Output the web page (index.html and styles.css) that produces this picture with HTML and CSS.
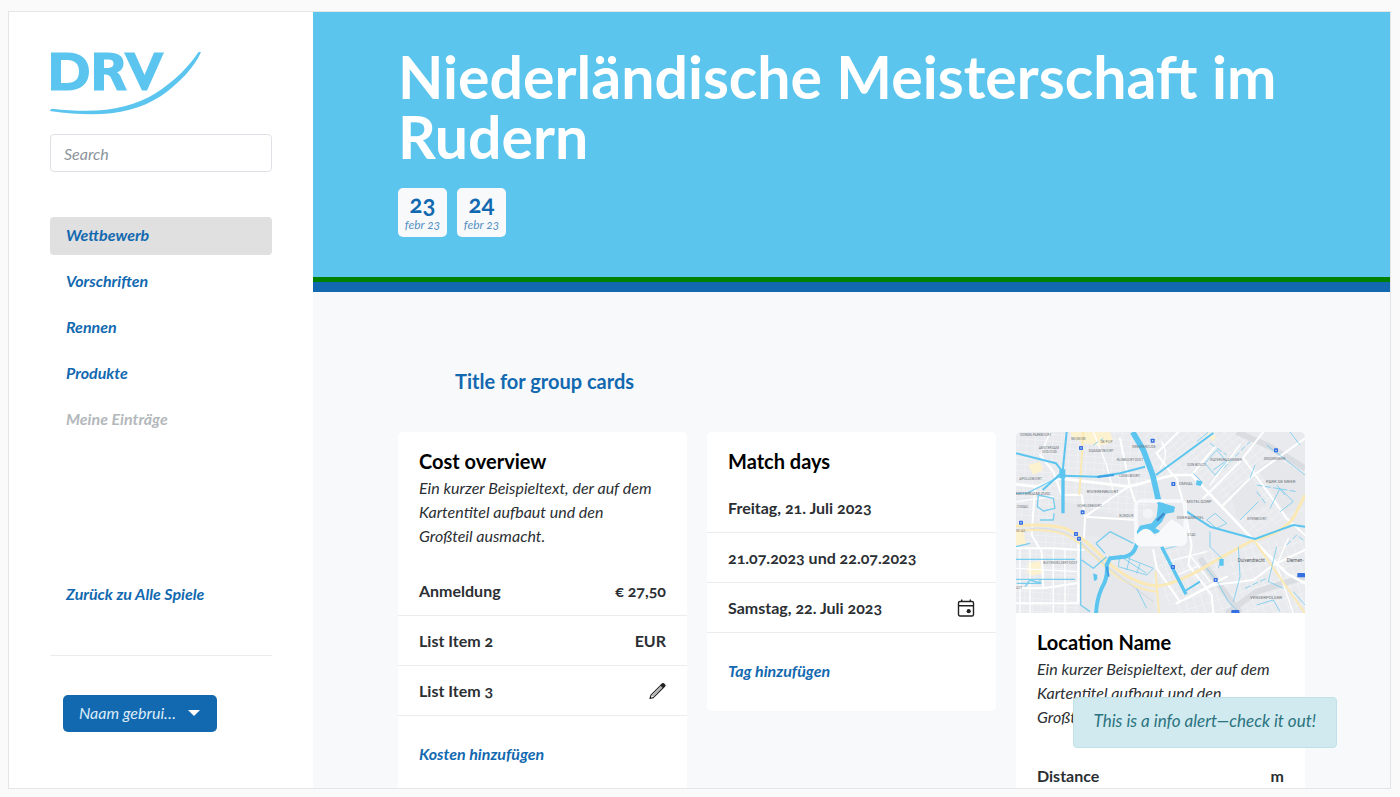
FILE: index.html
```html
<!DOCTYPE html>
<html lang="de">
<head>
<meta charset="utf-8">
<meta name="viewport" content="width=device-width, initial-scale=1">
<title>DRV – Niederländische Meisterschaft im Rudern</title>
<link rel="stylesheet" href="styles.css">
</head>
<body>
<div class="frame">
  <aside class="sidebar">
    <a class="logo" href="#" aria-label="DRV">
      <svg viewBox="0 0 152 64" width="152" height="64" aria-hidden="true">
        <g fill="#5bc5ef">
          <path fill-rule="evenodd" d="M1 1.500H17C31 1.500 39 8.500 39 20.500C39 32.500 31 39.500 17 39.500H1ZM11 9V32H17C25 32 29 28 29 20.500C29 13 25 9 17 9Z"/>
          <path fill-rule="evenodd" d="M44 1.500H58C68 1.500 73.500 5 73.500 12C73.500 17 71 20 67 21.500C69 22.500 70 24 71 26.500L77 39.500H67L61.500 28C60 24.500 58.500 23.500 54 23.500V39.500H44ZM54 8.500V17H57C61.500 17 63.500 15.500 63.500 12.500C63.500 9.500 61.500 8.500 58 8.500Z"/>
          <path d="M74 1.500H84.500L94.500 24L104 1.500H114L97 39.500H92Z"/>
          <path d="M0 60Q0 58 2 57.700C50 63 80 58 106 42C125 30 140 14 148.500 1H151C145 15 130 32 111 45C83 63 50 67 0 60Z"/>
        </g>
      </svg>
    </a>
    <input class="search" type="search" placeholder="Search" aria-label="Search">
    <nav class="menu" aria-label="Hauptmenü">
      <a class="menu-link active" href="#" aria-current="page">Wettbewerb</a>
      <a class="menu-link" href="#">Vorschriften</a>
      <a class="menu-link" href="#">Rennen</a>
      <a class="menu-link" href="#">Produkte</a>
      <a class="menu-link disabled" href="#" aria-disabled="true">Meine Einträge</a>
    </nav>
    <div class="back"><a class="menu-link" href="#">Zurück zu Alle Spiele</a></div>
    <div class="account">
      <button class="user-button" type="button"><span>Naam gebrui…</span><i class="caret"></i></button>
    </div>
  </aside>

  <main class="main">
    <header class="hero">
      <h1 class="hero-title">Niederländische Meisterschaft im Rudern</h1>
      <div class="dates">
        <time class="date" datetime="2023-02-23"><b>23</b><em>febr 23</em></time>
        <time class="date" datetime="2023-02-24"><b>24</b><em>febr 23</em></time>
      </div>
    </header>
    <section class="content">
      <h2 class="group-title">Title for group cards</h2>
      <div class="cards">
        <article class="card">
          <div class="card-body">
            <h3 class="card-title">Cost overview</h3>
            <p class="card-text">Ein kurzer Beispieltext, der auf dem Kartentitel aufbaut und den Großteil ausmacht.</p>
          </div>
          <ul class="list">
            <li><span>Anmeldung</span><span>€ 27,50</span></li>
            <li><span>List Item 2</span><span>EUR</span></li>
            <li><span>List Item 3</span>
              <button class="icon-button" type="button" aria-label="Bearbeiten">
                <svg viewBox="0 0 18 18" width="18" height="18" fill="none" stroke="#222" stroke-width="1.100" stroke-linejoin="round"><path d="M2 16.500L2.900 13.200L13 3.100L15.400 5.500L5.300 15.600Z"/><path d="M4.300 14.200L14.200 4.300" stroke-width="0.700"/><path d="M13 3.100L14.400 1.700Q15 1.200 15.600 1.700L16.800 2.900Q17.300 3.500 16.800 4.100L15.400 5.500Z" fill="#222"/></svg>
              </button>
            </li>
          </ul>
          <div class="card-foot"><a href="#">Kosten hinzufügen</a></div>
        </article>

        <article class="card">
          <div class="card-body">
            <h3 class="card-title">Match days</h3>
          </div>
          <ul class="list">
            <li><span>Freitag, 21. Juli 2023</span></li>
            <li><span>21.07.2023 und 22.07.2023</span></li>
            <li><span>Samstag, 22. Juli 2023</span>
              <button class="icon-button" type="button" aria-label="Kalender">
                <svg viewBox="0 0 18 18" width="18" height="18" fill="none" stroke="#222" stroke-width="1.400"><rect x="1.500" y="2.500" width="15" height="14.500" rx="1.500"/><path d="M1.500 6.700H16.500M4.700 0.500V3M13.300 0.500V3"/><circle cx="11.700" cy="12.200" r="2.100" fill="#222" stroke="none"/></svg>
              </button>
            </li>
          </ul>
          <div class="card-foot"><a href="#">Tag hinzufügen</a></div>
        </article>

        <article class="card">
          <svg class="map" viewBox="18 21 867 544" preserveAspectRatio="xMidYMid slice" role="img" aria-label="Karte">
            <defs>
              <pattern id="gridA" width="26" height="19" patternUnits="userSpaceOnUse" patternTransform="rotate(4)"><path d="M0 1H26M1 0V19" stroke="#f3f4f6" stroke-width="2"/></pattern>
              <pattern id="gridB" width="28" height="18" patternUnits="userSpaceOnUse" patternTransform="rotate(-40)"><path d="M0 1H28M1 0V18" stroke="#f3f4f6" stroke-width="2"/></pattern>
              <pattern id="gridC" width="24" height="30" patternUnits="userSpaceOnUse" patternTransform="rotate(-18)"><path d="M0 1H24M1 0V30" stroke="#f3f4f6" stroke-width="2"/></pattern>
            </defs>
            <rect x="18" y="21" width="867" height="544" fill="#e8eaed"/>
            <path d="M18 21H370L440 210L380 300L18 285Z" fill="url(#gridA)"/>
            <path d="M18 310L190 330L208 565H18Z" fill="url(#gridA)"/>
            <path d="M400 21H690L885 140V260L720 330L640 225L560 150L440 160Z" fill="url(#gridB)"/>
            <path d="M430 370L600 370L700 565H500L430 480Z" fill="url(#gridC)"/>
            <path d="M640 370L885 330V565H700Z" fill="url(#gridC)"/>
            <path d="M180 21H300L310 50L270 62L225 55L190 40ZM55 120L90 110L100 135L70 150ZM55 415L90 408L98 445L65 452L52 440ZM18 315L40 320L48 358L18 360ZM590 21L618 35L608 50Z" fill="#fdf2cf"/>
            <path d="M130 220L370 285L385 330L350 345L215 330L130 290ZM660 200L725 155L770 240L680 280ZM740 130L800 100L885 150V240L830 270ZM210 390L270 480L240 565H210ZM300 430L430 500L440 565H260Z" fill="#e5e7ea"/>
            <path d="M680 21L780 65L885 130M885 455L740 500L650 565M570 400L690 565" fill="none" stroke="#d9dde1" stroke-width="18"/>
            <g fill="none" stroke="#fff" stroke-linecap="round" stroke-linejoin="round">
              <path d="M18 178L80 185L150 160L355 185L490 150L545 150L735 350L830 445L885 475" stroke-width="8"/>
              <path d="M90 90L130 140L155 210H215L225 280L222 340M355 185L300 222L225 275L380 285M330 40L360 185L375 230M75 185L65 330L95 380L100 490M18 490H100L200 475M205 345V535M18 370L130 370L220 375M18 535H205" stroke-width="6"/>
              <path d="M505 21L440 85L480 140L500 160L520 235L545 360L535 420L605 510L610 565M430 375L440 430L510 530L610 480L730 465L790 420L885 375M545 150L615 65M580 220L690 110L760 21M700 100L830 280L885 330M640 240L725 155L885 40M500 535L650 455" stroke-width="6"/>
              <path d="M455 50Q480 90 450 130M120 21L95 85M250 21L290 120L310 200M18 230L130 215M470 410L590 380M18 430L205 440M30 375V565M60 375V565M130 375V565M165 375V565M500 450L560 425M835 340L800 420L850 565M600 470L540 390M690 60L600 180" stroke-width="4"/>
            </g>
            <g fill="none" stroke="#fbe9b5" stroke-linejoin="round">
              <path d="M18 303Q100 295 165 310Q215 330 285 405Q370 480 440 483Q500 480 620 405L720 350Q830 320 855 270L885 210" stroke-width="9"/>
              <path d="M18 318Q100 310 160 326Q205 345 275 415Q350 490 440 500M220 21L208 210M437 440L447 565M735 350L885 565" stroke-width="6"/>
              <path d="M60 310Q150 305 205 345Q290 430 430 530" stroke="#dadde1" stroke-width="4"/>
            </g>
            <g fill="none" stroke="#5bc5ef" stroke-linejoin="round">
              <path d="M368 21L400 75L428 150L445 225L460 250" stroke-width="17"/>
              <path d="M390 315L378 365Q370 390 345 395L300 400L290 420Q295 455 275 490Q260 525 258 565" stroke-width="12"/>
              <path d="M18 85L138 115L158 140L170 21M98 195L158 140M165 152L260 155L330 145L405 125M438 150L610 24M530 260L600 305L735 342L850 300L885 305M525 498L570 470" stroke-width="6"/>
              <path d="M455 365L528 508M159 150V265" stroke-width="10"/>
              <path opacity="0.800" d="M18 403H195M18 463H195M18 205H50L155 152M85 210L130 220L135 250L100 258L82 245ZM90 285H130L132 265M258 355L300 320L370 355M258 355L285 385M212 350V540L240 560M215 405L250 430L290 395M18 365L60 355M20 475H90V465M45 485L60 465L95 475" stroke-width="4"/>
              <path opacity="0.650" d="M585 115L620 75L650 110L615 150ZM610 135L645 110M590 285L615 265L650 295L620 310ZM600 320L600 365L635 400L625 430M685 365L690 455L670 530M800 365L775 470L820 490M550 145L575 170M590 430L625 475L655 530L690 565M770 60L885 150M735 120L720 160M745 230L690 285M780 250L810 190L850 230L810 260M800 180L825 210M595 21L560 50M840 21L870 60M330 390L430 430L410 450L325 425ZM340 400L410 445M360 395L350 435M390 415L380 445M740 540L790 525L810 560M850 500L885 540M380 490L410 550M455 375L510 360" stroke-width="3"/>
              <path opacity="0.700" d="M250 60L280 40M250 450L270 465M560 170H575M600 55L650 90M640 130L720 50M740 180L860 200M740 200L770 240M830 360L860 330L885 350M705 490L770 460" stroke-width="3" stroke-dasharray="18 7"/>
              <path d="M262 156L312 150M290 425L296 455" stroke="#3d9fe4" stroke-width="6"/>
            </g>
            <path d="M148 133H166V160H148ZM250 445L262 450L260 465L252 468ZM560 165L578 170L572 183L558 180ZM628 402H641V422H628Z" fill="#5bc5ef"/>
            <rect x="378" y="228" width="148" height="130" rx="14" fill="none" stroke="#f8f9fb" stroke-width="11"/>
            <path d="M445 230L470 238L495 245L492 262L468 266L456 290L436 310L455 320L420 330L385 335L380 320L390 302L425 295L440 275Z" fill="#5bc5ef"/>
            <path d="M376 335Q408 288 436 333Q460 306 484 283Q512 296 530 320V345Q530 360 515 360H390Q376 360 376 345Z" fill="#f8f9fb"/><circle cx="414" cy="266" r="15" fill="#f3f4f6"/>
            <path d="M441 287L463 265" stroke="#3f8dcc" stroke-width="8"/>
            <g fill="#336fe0">
              <rect x="207" y="63" width="12" height="12" rx="2"/><rect x="422" y="41" width="12" height="12" rx="2"/><rect x="792" y="70" width="12" height="12" rx="2"/><rect x="484" y="171" width="12" height="12" rx="2"/><rect x="212" y="256" width="12" height="12" rx="2"/><rect x="27" y="287" width="12" height="12" rx="2"/><rect x="192" y="321" width="12" height="12" rx="2"/><rect x="201" y="335" width="12" height="12" rx="2"/><rect x="483" y="420" width="12" height="12" rx="2"/><rect x="611" y="459" width="12" height="12" rx="2"/><rect x="862" y="444" width="23" height="13" rx="2"/><rect x="664" y="555" width="24" height="10" rx="2"/>
            </g>
            <g fill="#fff"><circle cx="213" cy="69" r="2"/><circle cx="428" cy="47" r="2"/><circle cx="798" cy="76" r="2"/><circle cx="490" cy="177" r="2"/><circle cx="218" cy="262" r="2"/><circle cx="33" cy="293" r="2"/><circle cx="198" cy="327" r="2"/><circle cx="207" cy="341" r="2"/><circle cx="489" cy="426" r="2"/><circle cx="617" cy="465" r="2"/></g>
            <g class="map-labels">
              <text x="30" y="34">VONDELPARKBUURT</text><text x="184" y="44">MUSEUM</text><text x="272" y="55">DE PIJP</text>
              <text x="86" y="73">AMSTERDAM</text><text x="96" y="84">OUD-ZUID</text><text x="236" y="81">DIAMANTBUURT</text>
              <text x="366" y="69">WEESPERZIJDE</text><text x="320" y="109">RIJNBUURT-OOST</text><text x="328" y="155">IJSSELBUURT</text>
              <text x="28" y="166">APOLLOBUURT</text><text class="big" x="18" y="210">MSTERDAM-ZUID</text><text class="big" x="230" y="204">RIVIERENBUURT</text>
              <text x="202" y="245">SCHELDEBUURT</text><text x="328" y="275">RIJNDIJK</text><text x="532" y="122">DON BOSCO</text>
              <text x="600" y="109">WATERGRAAFSMEER</text><text x="762" y="105">MIDDENMEER</text><text class="big" x="768" y="174">PARK DE MEER</text>
              <text class="big" x="506" y="181">OMVAL</text><text class="big" x="530" y="234">MSTELDORP</text><text class="big" x="500" y="282">OVERAMSTEL</text>
              <text x="712" y="286">EITENBUURT</text><text x="532" y="334">STAD</text><text x="20" y="248">ZUIDAS</text><text x="18" y="321">VU AS</text>
              <text x="100" y="417">BUITENVELDERT-OOST</text><text x="18" y="493">AST</text><text class="big" x="720" y="523">VENSERPOLDER</text>
              <text class="town" x="683" y="411">Duivendrecht</text><text class="town" x="830" y="412">Diemen-</text>
            </g>
          </svg>
          <div class="card-body">
            <h3 class="card-title">Location Name</h3>
            <p class="card-text">Ein kurzer Beispieltext, der auf dem Kartentitel aufbaut und den Großteil ausmacht.</p>
          </div>
          <ul class="list">
            <li><span>Distance</span><span>m</span></li>
          </ul>
        </article>
      </div>
    </section>
  </main>
  <div class="alert" role="alert">This is a info alert—check it out!</div>
</div>
</body>
</html>
```

FILE: styles.css
```css
* { box-sizing: border-box; }

body {
  margin: 0;
  padding: 11px 9px 8px 8px;
  height: 100vh;
  background: #fafafa;
  color: #2b2f33;
  font-family: Lato, "Noto Sans", sans-serif;
  font-size: 16px;
  line-height: 24px;
  font-variant-numeric: oldstyle-nums;
}

h1, h2, h3, p, ul { margin: 0; padding: 0; }
a { color: #1269b0; text-decoration: none; }
button, input { font: inherit; }

.frame {
  position: relative;
  display: flex;
  height: 100%;
  overflow: hidden;
  border: 1px solid #e4e5e6;
  background: #f8f9fb;
}

.sidebar {
  flex: none;
  width: 304px;
  padding: 39px 41px;
  background: #fff;
}

.logo { display: block; height: 83px; }
.logo svg { display: block; }

.search {
  display: block;
  width: 100%;
  height: 38px;
  padding: 0 13px;
  border: 1px solid #dee2e6;
  border-radius: 4px;
  background: #fff;
  font-style: italic;
  appearance: none;
}
.search::placeholder { color: #8d949b; opacity: 1; }

.menu { display: grid; gap: 8px; margin-top: 45px; }
.menu-link {
  display: block;
  height: 38px;
  padding: 6px 16px;
  border-radius: 4px;
  font-weight: 700;
  font-style: italic;
}
.menu-link.active { background: #e0e0e0; }
.menu-link.disabled { color: #b3b8bc; }

.back {
  margin-top: 137px;
  padding-bottom: 41px;
  border-bottom: 1px solid #ececec;
}
.account { padding: 39px 13px; }

.user-button {
  display: flex;
  align-items: center;
  gap: 12px;
  height: 37px;
  padding: 0 17px 2px 16px;
  border: 0;
  border-radius: 5px;
  background: #1269b0;
  color: #dcecf9;
  font-style: italic;
}
.caret {
  border: 6px solid transparent;
  border-top-color: #fff;
  border-bottom-width: 0;
}

.main { flex: 1; min-width: 0; }

.hero {
  padding: 35px 85px 40px;
  border-bottom: 10px solid #1269b0;
  background: linear-gradient(#008000, #008000) bottom / 100% 5px no-repeat #5bc5ee;
}
.hero-title {
  color: #fff;
  font-size: 59px;
  line-height: 60px;
  font-weight: 700;
}
.dates { display: flex; gap: 10px; margin-top: 21px; padding-bottom: 5px; }
.date {
  display: flex;
  flex-direction: column;
  align-items: center;
  width: 49px;
  height: 49px;
  border-radius: 5px;
  background: #f8f9fb;
  color: #1269b0;
}
.date b { font-size: 24px; line-height: 31px; }
.date em { font-size: 12px; line-height: 12px; color: #5590c4; }

.content { padding: 76px 85px 0; }
.group-title {
  padding: 0 57px;
  color: #1269b0;
  font-size: 20px;
  line-height: 26px;
}
.cards {
  display: grid;
  grid-template-columns: repeat(3, minmax(0, 1fr));
  gap: 20px;
  align-items: start;
  margin-top: 38px;
}
.card {
  overflow: hidden;
  border-radius: 5px;
  background: #fff;
}
.map { display: block; width: 100%; height: auto; }
.map-labels {
  fill: #6d737a;
  font-family: Roboto, sans-serif;
  font-size: 10px;
}
.map-labels .big { font-size: 13px; }
.map-labels .town { font-size: 14px; fill: #555b62; }

.card-body { padding: 16px 21px 9px; }
.map + .card-body { padding-bottom: 13px; }
.card-title {
  color: #000;
  font-size: 20px;
  line-height: 26px;
}
.card-text { font-style: italic; padding: 2px 8px 9px 0; }

.list { list-style: none; font-weight: 700; }
.list li {
  display: flex;
  align-items: center;
  justify-content: space-between;
  height: 50px;
  padding: 0 21px;
  border-bottom: 1px solid #ececec;
}
.icon-button {
  display: flex;
  padding: 0;
  border: 0;
  background: none;
}
.card-foot {
  padding: 26px 21px 28px;
  font-weight: 700;
  font-style: italic;
}

.alert {
  position: absolute;
  right: 53px;
  bottom: 40px;
  padding: 11px 20px 14px;
  border: 1px solid #bfe1e7;
  border-radius: 4px;
  background: #d0eaef;
  color: #2b7380;
  font-size: 17px;
  font-style: italic;
}
```
